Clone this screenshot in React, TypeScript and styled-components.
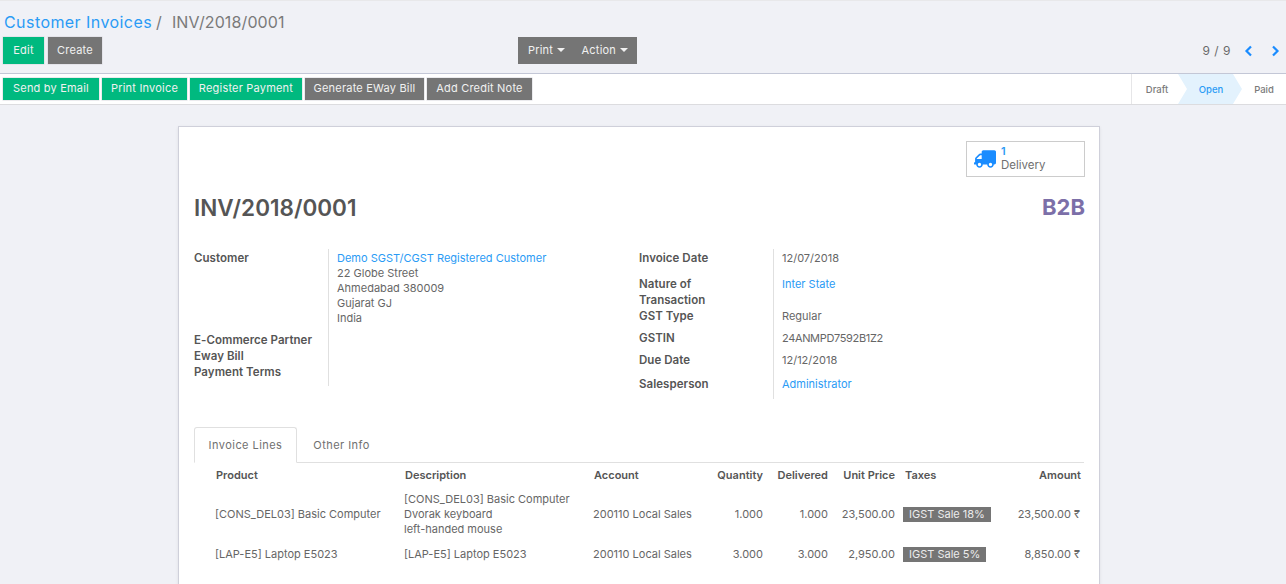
import React from "react";
import styled, { createGlobalStyle } from "styled-components";
import { FaTruck } from "react-icons/fa";

const Global = createGlobalStyle`
  html, body { margin: 0; padding: 0; height: 584px; overflow: hidden; background: #f0f1f6; }
  body { font-family: Inter, "Liberation Sans", sans-serif; font-size: 11px; color: #666; }
  * { box-sizing: border-box; }
`;

const Page = styled.div`display: flex; flex-direction: column; height: 584px; overflow: hidden;`;
const ControlPanel = styled.header`height: 74px; padding: 12px 0 0 3px; border-top: 1px solid #e8e8ea; border-bottom: 1px solid #c3c7d6; flex: none;`;
const Breadcrumb = styled.div`display: flex; height: 23px; margin-left: 1px; font-size: 16px; line-height: 18px; letter-spacing: .12px; color: #7a7a7a;`;
const Crumb = styled.a`color: #2a9bf5; letter-spacing: .43px;`;
const Separator = styled.span`margin: 0 10px 0 4px;`;
const ControlRow = styled.div`display: grid; grid-template-columns: 515px 119px 1fr; height: 27px; margin-top: 1px;`;
const ButtonRow = styled.div<{ $gap?: number }>`display: flex; gap: ${p => p.$gap ?? 3}px;`;
const Button = styled.button<{ $green?: boolean; $w: number; $h?: number }>`
  width: ${p => p.$w}px; height: ${p => p.$h ?? 27}px; padding: 0 0 2px; border: 0; border-radius: 0;
  font: 400 11px Inter, sans-serif; letter-spacing: .2px; color: #f1f1f1;
  background: ${p => p.$green ? "#00b97f" : "#757575"};
  box-shadow: 0 0 0 .5px #d8d8de;
`;
const MenuGroup = styled.div`display: flex; align-items: center; justify-content: space-between; height: 27px; padding: 0 9px 2px 10px; background: #757575; color: #f1f1f1; font-size: 11px; letter-spacing: .2px;`;
const Caret = styled.i`display: inline-block; margin: 0 0 2px 4px; border: 4px solid transparent; border-top-color: #f1f1f1; border-bottom: 0; vertical-align: middle;`;
const Pager = styled.div`display: flex; align-items: center; justify-content: flex-end; padding-right: 6px; font-size: 12px; letter-spacing: .5px; color: #6a6a6a;`;
const PagerText = styled.span`margin-right: 13px;`;
const Chevron = styled.svg<{ $ml?: number }>`display: block; margin-left: ${p => p.$ml ?? 0}px; width: 10px; height: 12px;`;

const StatusBar = styled.div`display: flex; justify-content: space-between; align-items: center; height: 31px; padding-left: 3px; background: #fff; border-bottom: 1px solid #dcdcdf; flex: none;`;
const Stages = styled.div`display: flex; height: 30px; border-left: 1px solid #e6e6e8;`;
const Stage = styled.div<{ $active?: boolean; $w: number; $pl?: number }>`
  width: ${p => p.$w}px; padding-left: ${p => p.$pl ?? 0}px; display: flex; align-items: center; justify-content: center;
  font-size: 9.5px; font-weight: 500; color: ${p => p.$active ? "#2a9bf5" : "#7a7a7a"};
  background: ${p => p.$active ? "#e3f2fd" : "transparent"};
  clip-path: ${p => p.$active ? "polygon(0 0, calc(100% - 9px) 0, 100% 50%, calc(100% - 9px) 100%, 0 100%, 9px 50%)" : "none"};
`;

const Main = styled.main`flex: 1; padding: 21px 0 0 178px; min-height: 0;`;
const Sheet = styled.section`width: 922px; height: 500px; padding: 14px 14px 0 15px; background: #fff; border: 1px solid #cfd0da; box-shadow: 0 1px 3px rgba(0,0,0,.08);`;
const TopRow = styled.div`display: flex; justify-content: flex-end;`;
const StatButton = styled.div`display: flex; align-items: center; gap: 5px; width: 119px; height: 36px; padding: 0 0 0 7px; border: 1px solid #ccc;`;
const TruckIcon = styled(FaTruck)`display: block; width: 22px; height: 18px; color: #1a8cff; transform: scaleX(-1); flex: none;`;
const StatText = styled.div`display: flex; flex-direction: column; padding-bottom: 2px; font-size: 11.5px; line-height: 14px; color: #707070;`;
const StatNum = styled.span`color: #2a9bf5; font-weight: 600; font-size: 11px;`;
const TitleRow = styled.div`display: flex; justify-content: space-between; align-items: center; margin-top: 16px; height: 28px;`;
const Title = styled.h1`margin: 0; font-size: 22.5px; font-weight: 600; color: #555;`;
const Badge = styled.div`font-size: 22px; font-weight: 700; color: #7c6fa8;`;

const FormGrid = styled.div`display: grid; grid-template-columns: 445px 1fr; align-items: start; margin-top: 28px;`;
const FormCol = styled.div<{ $label: number }>`display: grid; grid-template-columns: ${p => p.$label}px 1fr;`;
const Labels = styled.div`padding-top: 1px; border-right: 1px solid #e0e0e0;`;
const Label = styled.div<{ $h?: number }>`height: ${p => p.$h ?? 16}px; font-size: 11.5px; line-height: 16px; font-weight: 600; color: #555; letter-spacing: .05px;`;
const Values = styled.div`padding: 2px 0 0 8px;`;
const Value = styled.div<{ $h?: number; $link?: boolean; $tight?: boolean }>`
  height: ${p => p.$h ?? 16}px; font-size: 11px; line-height: 15px;
  color: ${p => p.$link ? "#2a9bf5" : "#666"}; letter-spacing: ${p => p.$tight ? "-.35px" : "0"};
`;
const Address = styled.div`font-size: 11px; line-height: 15px; color: #666;`;

const Tabs = styled.nav`display: flex; width: 890px; margin-top: 28px; height: 36px; border-bottom: 1px solid #e0e0e0;`;
const Tab = styled.div<{ $active?: boolean }>`
  width: ${p => p.$active ? 103 : 91}px; height: 36px; display: flex; align-items: center; justify-content: center;
  padding-right: ${p => p.$active ? 0 : 2}px;
  font-size: 11px; letter-spacing: .45px; color: #707070;
  ${p => p.$active && "border: 1px solid #e0e0e0; border-bottom: 1px solid #fff; border-radius: 3px 3px 0 0;"}
`;
const Table = styled.table`width: 890px; table-layout: fixed; border-collapse: collapse; font-size: 11px; color: #666;`;
const Th = styled.th<{ $right?: boolean; $w: number; $pl?: number; $pr?: number }>`
  width: ${p => p.$w}px; height: 23px; padding: 0 ${p => p.$pr ?? (p.$right ? 5 : 0)}px 0 ${p => p.$pl ?? 0}px;
  font-weight: 600; color: #555; font-size: 11px; text-align: ${p => p.$right ? "right" : "left"};
`;
const Td = styled.td<{ $right?: boolean; $pl?: number; $pr?: number; $h?: number }>`
  padding: 0 ${p => p.$pr ?? (p.$right ? 5 : 0)}px 0 ${p => p.$pl ?? 0}px; line-height: 15px; height: ${p => p.$h ?? 24}px;
  text-align: ${p => p.$right ? "right" : "left"}; vertical-align: middle;
`;
const Tag = styled.span`display: inline-block; height: 15px; padding: 0 6px; line-height: 15px; background: #757575; color: #ececec;`;

const rows = [
  { p: "[CONS_DEL03] Basic Computer", d: ["[CONS_DEL03] Basic Computer", "Dvorak keyboard", "left-handed mouse"], q: "1.000", u: "23,500.00", t: "IGST Sale 18%", a: "23,500.00 ₹", h: 56 },
  { p: "[LAP-E5] Laptop E5023", d: ["[LAP-E5] Laptop E5023"], q: "3.000", u: "2,950.00", t: "IGST Sale 5%", a: "8,850.00 ₹", h: 24 },
];

export default function App() {
  return (
    <Page>
      <Global />
      <ControlPanel>
        <Breadcrumb><Crumb>Customer Invoices</Crumb><Separator>/</Separator><span>INV/2018/0001</span></Breadcrumb>
        <ControlRow>
          <ButtonRow $gap={4}>
            <Button $green $w={41}>Edit</Button>
            <Button $w={54}>Create</Button>
          </ButtonRow>
          <MenuGroup>
            <span>Print<Caret /></span>
            <span>Action<Caret /></span>
          </MenuGroup>
          <Pager>
            <PagerText>9 / 9</PagerText>
            <Chevron viewBox="0 0 10 12"><path d="M7 1.5 L2.5 6 L7 10.5" fill="none" stroke="#1a8cff" strokeWidth="2.2" /></Chevron>
            <Chevron viewBox="0 0 10 12" $ml={16}><path d="M3 1.5 L7.5 6 L3 10.5" fill="none" stroke="#1a8cff" strokeWidth="2.2" /></Chevron>
          </Pager>
        </ControlRow>
      </ControlPanel>
      <StatusBar>
        <ButtonRow>
          <Button $green $w={96} $h={22}>Send by Email</Button>
          <Button $green $w={85} $h={22}>Print Invoice</Button>
          <Button $green $w={112} $h={22}>Register Payment</Button>
          <Button $w={119} $h={22}>Generate EWay Bill</Button>
          <Button $w={105} $h={22}>Add Credit Note</Button>
        </ButtonRow>
        <Stages>
          <Stage $w={46} $pl={4}>Draft</Stage>
          <Stage $active $w={64} $pl={2}>Open</Stage>
          <Stage $w={44}>Paid</Stage>
        </Stages>
      </StatusBar>
      <Main>
        <Sheet>
          <TopRow>
            <StatButton>
              <TruckIcon />
              <StatText><StatNum>1</StatNum><span>Delivery</span></StatText>
            </StatButton>
          </TopRow>
          <TitleRow><Title>INV/2018/0001</Title><Badge>B2B</Badge></TitleRow>
          <FormGrid>
            <FormCol $label={135}>
              <Labels>
                <Label $h={82}>Customer</Label>
                <Label>E-Commerce Partner</Label>
                <Label>Eway Bill</Label>
                <Label $h={22}>Payment Terms</Label>
              </Labels>
              <Values>
                <Value $link $h={15}>Demo SGST/CGST Registered Customer</Value>
                <Address>22 Globe Street<br />Ahmedabad 380009<br />Gujarat GJ<br />India</Address>
              </Values>
            </FormCol>
            <FormCol $label={135}>
              <Labels>
                <Label $h={26}>Invoice Date</Label>
                <Label $h={32}>Nature of<br />Transaction</Label>
                <Label $h={22}>GST Type</Label>
                <Label $h={22}>GSTIN</Label>
                <Label $h={24}>Due Date</Label>
                <Label $h={23}>Salesperson</Label>
              </Labels>
              <Values>
                <Value $h={26}>12/07/2018</Value>
                <Value $link $h={32}>Inter State</Value>
                <Value $h={22}>Regular</Value>
                <Value $h={22} $tight>24ANMPD7592B1Z2</Value>
                <Value $h={24}>12/12/2018</Value>
                <Value $link>Administrator</Value>
              </Values>
            </FormCol>
          </FormGrid>
          <Tabs><Tab $active>Invoice Lines</Tab><Tab>Other Info</Tab></Tabs>
          <Table>
            <thead>
              <tr>
                <Th $w={210} $pl={22}>Product</Th>
                <Th $w={189} $pl={1}>Description</Th>
                <Th $w={110} $pl={1}>Account</Th>
                <Th $w={65} $right>Quantity</Th>
                <Th $w={65} $right>Delivered</Th>
                <Th $w={67} $right>Unit Price</Th>
                <Th $w={102} $pl={5}>Taxes</Th>
                <Th $w={82} $right $pr={3}>Amount</Th>
              </tr>
            </thead>
            <tbody>
              {rows.map(r => (
                <tr key={r.p}>
                  <Td $pl={21} $h={r.h}>{r.p}</Td>
                  <Td $h={r.h}>{r.d.map(l => <div key={l}>{l}</div>)}</Td>
                  <Td>200110 Local Sales</Td>
                  <Td $right>{r.q}</Td>
                  <Td $right>{r.q}</Td>
                  <Td $right>{r.u}</Td>
                  <Td $pl={3}><Tag>{r.t}</Tag></Td>
                  <Td $right $pr={4}>{r.a}</Td>
                </tr>
              ))}
            </tbody>
          </Table>
        </Sheet>
      </Main>
    </Page>
  );
}
